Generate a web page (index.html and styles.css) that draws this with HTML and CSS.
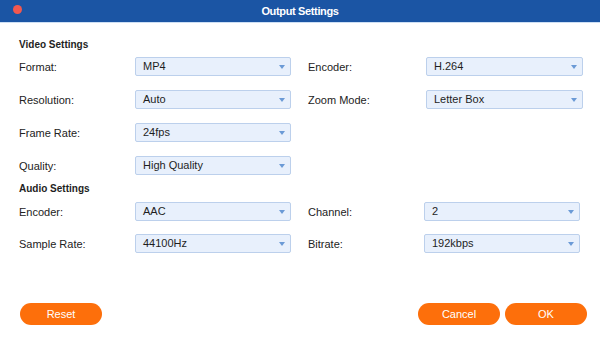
FILE: index.html
```html
<!DOCTYPE html>
<html>
<head>
<meta charset="utf-8">
<link rel="stylesheet" href="styles.css">
</head>
<body>
<div class="dialog">
  <div class="titlebar">
    <span class="close"></span>
    <span class="title">Output Settings</span>
  </div>
  <div class="content">
    <div class="heading">Video Settings</div>
    <div class="grid video">
      <div class="lbl">Format:</div>
      <div class="sel">MP4</div>
      <div class="lbl lbl-r">Encoder:</div>
      <div class="sel">H.264</div>

      <div class="lbl">Resolution:</div>
      <div class="sel">Auto</div>
      <div class="lbl lbl-r">Zoom Mode:</div>
      <div class="sel">Letter Box</div>

      <div class="lbl">Frame Rate:</div>
      <div class="sel">24fps</div>
      <div class="empty"></div>
      <div class="empty"></div>

      <div class="lbl">Quality:</div>
      <div class="sel">High Quality</div>
      <div class="empty"></div>
      <div class="empty"></div>
    </div>
    <div class="heading audio-h">Audio Settings</div>
    <div class="grid audio">
      <div class="lbl">Encoder:</div>
      <div class="sel">AAC</div>
      <div class="lbl lbl-r">Channel:</div>
      <div class="sel sel-a">2</div>

      <div class="lbl">Sample Rate:</div>
      <div class="sel">44100Hz</div>
      <div class="lbl lbl-r">Bitrate:</div>
      <div class="sel sel-a">192kbps</div>
    </div>
  </div>
  <div class="footer">
    <button class="btn">Reset</button>
    <div class="right">
      <button class="btn">Cancel</button>
      <button class="btn">OK</button>
    </div>
  </div>
</div>
</body>
</html>
```
FILE: styles.css
```css
* { box-sizing: border-box; }
html, body {
  margin: 0;
  padding: 0;
  background: #ffffff;
}
body {
  font-family: "Liberation Sans", Arial, sans-serif;
  color: #222222;
}
.dialog {
  width: 600px;
  height: 340px;
  display: flex;
  flex-direction: column;
  background: #ffffff;
}
.titlebar {
  height: 23px;
  flex: none;
  background: #1b55a4;
  border-bottom: 1px solid #cddff4;
  position: relative;
  display: flex;
  align-items: center;
  justify-content: center;
}
.close {
  position: absolute;
  left: 13px;
  top: 5px;
  width: 9px;
  height: 9px;
  border-radius: 50%;
  background: #f3584f;
}
.title {
  color: #ffffff;
  font-size: 11px;
  font-weight: bold;
  letter-spacing: -0.35px;
  margin-top: -1px;
}
.content {
  padding: 15px 0 0 19px;
  flex: 1;
}
.heading {
  font-size: 10px;
  font-weight: bold;
  line-height: 13px;
  height: 13px;
  color: #1e1e1e;
  margin-bottom: 6px;
}
.audio-h {
  margin-top: 7px;
  margin-bottom: 7px;
}
.grid {
  display: grid;
  grid-template-columns: 116px 156px 135px 157px;
  grid-auto-rows: 19px;
  align-items: center;
}
.video { row-gap: 14px; }
.audio { row-gap: 13px; }
.lbl {
  font-size: 11px;
  color: #222222;
}
.lbl-r { padding-left: 17px; }
.sel {
  height: 19px;
  border: 1px solid #bcd0ec;
  background: #e8f0fc;
  border-radius: 2px;
  font-size: 11px;
  line-height: 17px;
  padding-left: 7px;
  color: #1e1e1e;
  position: relative;
}
.sel-a {
  width: 156px;
  margin-left: -2px;
}
.sel::after {
  content: "";
  position: absolute;
  right: 5px;
  top: 7px;
  width: 0;
  height: 0;
  border-left: 3.5px solid transparent;
  border-right: 3.5px solid transparent;
  border-top: 4px solid #6b9ad6;
}
.footer {
  flex: none;
  display: flex;
  justify-content: space-between;
  padding: 0 13px 15px 20px;
}
.right {
  display: flex;
  gap: 5px;
}
.btn {
  width: 82px;
  height: 22px;
  border: none;
  border-radius: 11px;
  background: #fd6f0b;
  color: #ffffff;
  font-family: "Liberation Sans", Arial, sans-serif;
  font-size: 11px;
  padding: 0;
}
```
